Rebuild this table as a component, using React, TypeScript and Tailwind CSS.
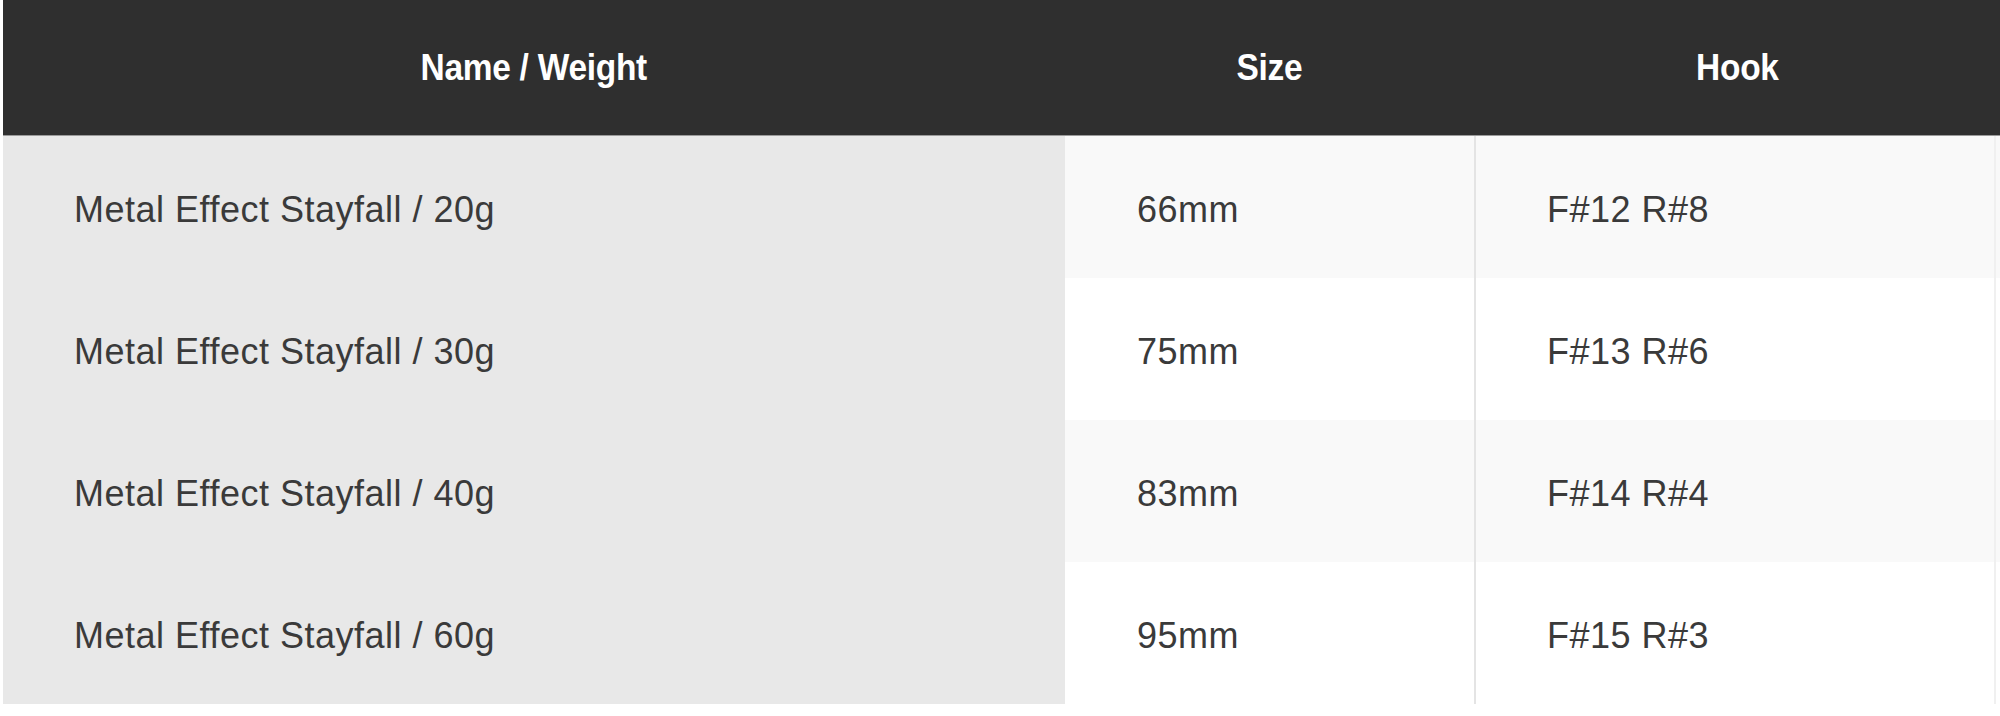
import React from "react";

const rows = [
  { name: "Metal Effect Stayfall / 20g", size: "66mm", hook: "F#12 R#8" },
  { name: "Metal Effect Stayfall / 30g", size: "75mm", hook: "F#13 R#6" },
  { name: "Metal Effect Stayfall / 40g", size: "83mm", hook: "F#14 R#4" },
  { name: "Metal Effect Stayfall / 60g", size: "95mm", hook: "F#15 R#3" },
];

function Head({ children }: { children: React.ReactNode }) {
  return (
    <div className="flex items-center justify-center">
      <span className="inline-block scale-x-[0.93] tracking-[-0.3px]">{children}</span>
    </div>
  );
}

export default function App() {
  return (
    <div className="w-[2000px] h-[716px] bg-white pl-[3px] font-['Liberation_Sans',Arial,sans-serif]">
      <div className="grid grid-cols-[1062px_409px_1fr] bg-[#2f2f2f] h-[136px] border-b border-[#9a9a9a] text-white font-bold text-[36px]">
        <Head>Name / Weight</Head>
        <Head>Size</Head>
        <Head>Hook</Head>
      </div>
      {rows.map((r, i) => (
        <div
          key={r.name}
          className={
            i % 2 === 0
              ? "grid grid-cols-[1062px_409px_1fr] h-[142px] text-[#3a3a3a] text-[36px] tracking-[0.5px] bg-[#f9f9f9]"
              : "grid grid-cols-[1062px_409px_1fr] h-[142px] text-[#3a3a3a] text-[36px] tracking-[0.5px] bg-white"
          }
        >
          <div className="flex items-center bg-[#e8e8e8] pl-[71px] pt-[6px]">{r.name}</div>
          <div className="flex items-center pl-[72px] pt-[6px]">{r.size}</div>
          <div className="flex items-center pl-[71px] pt-[6px] border-l-2 border-[#e4e4e4] mr-[4px] border-r-2 border-r-[#f0f0f0]">
            {r.hook}
          </div>
        </div>
      ))}
    </div>
  );
}
